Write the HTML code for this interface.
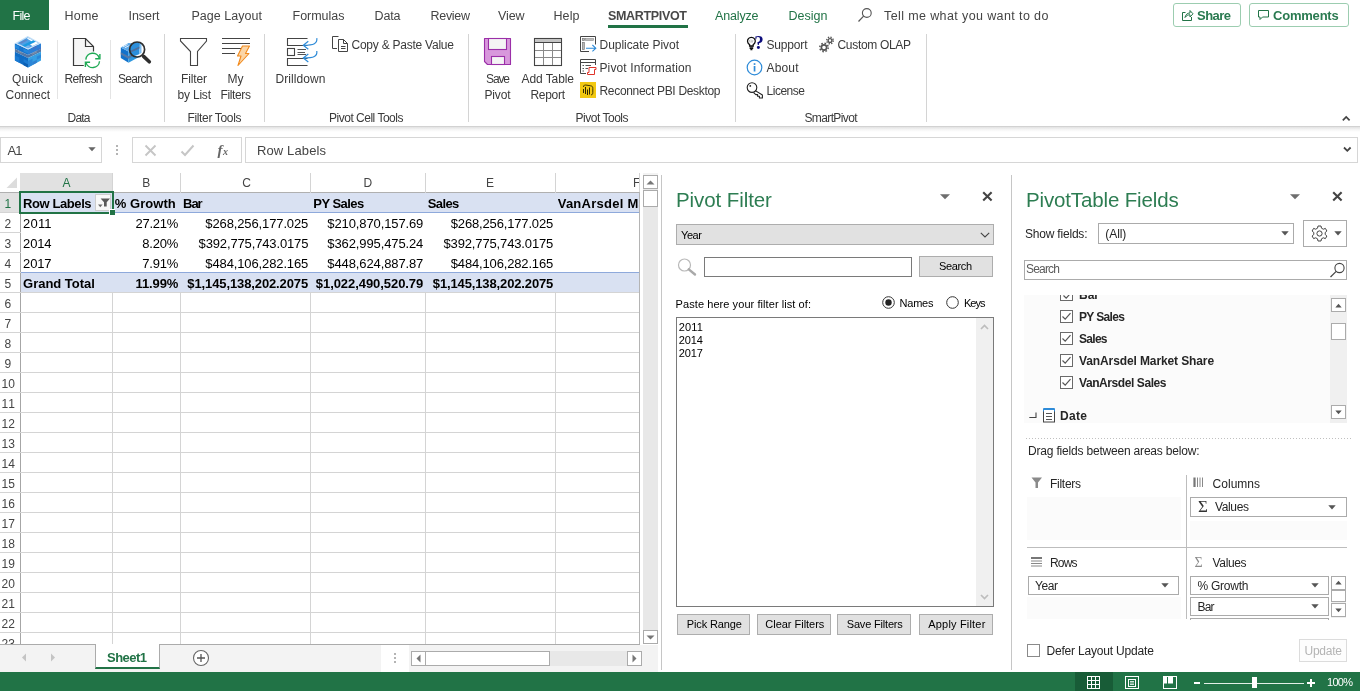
<!DOCTYPE html>
<html><head><meta charset="utf-8"><title>Excel SmartPivot</title>
<style>
html,body{margin:0;padding:0;}
body{width:1360px;height:691px;overflow:hidden;background:#fff;font-family:"Liberation Sans",sans-serif;position:relative;}
.t{position:absolute;white-space:pre;}
div,svg{box-sizing:border-box;}
svg{position:absolute;overflow:visible;}
#gl{position:absolute;left:0;top:0;width:1360px;height:691px;will-change:transform;}
</style></head><body><div id="gl">

<!-- tab row -->
<div style="position:absolute;left:0px;top:0px;width:49px;height:30px;background:#217346;"></div>
<span class="t" style="left:12.5px;top:9px;font-size:12.5px;line-height:15px;color:#fff;letter-spacing:-0.72px;">File</span>
<span class="t" style="left:64.5px;top:9px;font-size:12.5px;line-height:15px;color:#444;letter-spacing:0.22px;">Home</span>
<span class="t" style="left:128.5px;top:9px;font-size:12.5px;line-height:15px;color:#444;letter-spacing:-0.05px;">Insert</span>
<span class="t" style="left:191.5px;top:9px;font-size:12.5px;line-height:15px;color:#444;letter-spacing:0.03px;">Page Layout</span>
<span class="t" style="left:292.5px;top:9px;font-size:12.5px;line-height:15px;color:#444;letter-spacing:-0.01px;">Formulas</span>
<span class="t" style="left:374.5px;top:9px;font-size:12.5px;line-height:15px;color:#444;letter-spacing:-0.14px;">Data</span>
<span class="t" style="left:430.5px;top:9px;font-size:12.5px;line-height:15px;color:#444;letter-spacing:-0.30px;">Review</span>
<span class="t" style="left:498.0px;top:9px;font-size:12.5px;line-height:15px;color:#444;letter-spacing:-0.12px;">View</span>
<span class="t" style="left:553.5px;top:9px;font-size:12.5px;line-height:15px;color:#444;letter-spacing:0.09px;">Help</span>
<span class="t" style="left:608.0px;top:9px;font-size:12.5px;line-height:15px;color:#484848;font-weight:700;letter-spacing:-0.33px;">SMARTPIVOT</span>
<div style="position:absolute;left:608px;top:25px;width:80px;height:3px;background:#217346;"></div>
<span class="t" style="left:715.0px;top:9px;font-size:12.5px;line-height:15px;color:#217346;letter-spacing:-0.16px;">Analyze</span>
<span class="t" style="left:788.5px;top:9px;font-size:12.5px;line-height:15px;color:#217346;letter-spacing:0.02px;">Design</span>
<svg style="left:857px;top:7px" width="16" height="16" viewBox="0 0 16 16"><circle cx="9.8" cy="6" r="4.4" fill="none" stroke="#555" stroke-width="1.1"/><path d="M6.6 9.2 L1.5 14.5" stroke="#555" stroke-width="1.2" fill="none"/></svg>
<span class="t" style="left:884.0px;top:9px;font-size:12.5px;line-height:15px;color:#444;letter-spacing:0.39px;">Tell me what you want to do</span>
<div style="position:absolute;left:1173px;top:3px;width:68px;height:24px;border:1px solid #9ccdb0;border-radius:3px;background:#fff;"></div>
<svg style="left:1180px;top:8px" width="14" height="14" viewBox="0 0 14 14"><path d="M5.5 4.5 H2.5 V12.5 H11.5 V9" fill="none" stroke="#217346" stroke-width="1"/><path d="M5 9.5 C5.5 6.5 7.5 5 10 5 V2.5 L13 5.8 L10 9 V6.8 C8 6.8 6.5 7.5 5 9.5 Z" fill="none" stroke="#217346" stroke-width="1" stroke-linejoin="round"/></svg>
<span class="t" style="left:1197.0px;top:8px;font-size:13px;line-height:15px;color:#2a7a50;font-weight:700;letter-spacing:-0.54px;">Share</span>
<div style="position:absolute;left:1249px;top:3px;width:100px;height:24px;border:1px solid #9ccdb0;border-radius:3px;background:#fff;"></div>
<svg style="left:1257px;top:9px" width="13" height="13" viewBox="0 0 13 13"><path d="M1.5 1.5 H11.5 V8 H5.5 L3 10.5 V8 H1.5 Z" fill="none" stroke="#217346" stroke-width="1"/></svg>
<span class="t" style="left:1273.0px;top:8px;font-size:13px;line-height:15px;color:#2a7a50;font-weight:700;letter-spacing:-0.21px;">Comments</span>
<!-- ribbon -->
<div style="position:absolute;left:0px;top:126px;width:1360px;height:1px;background:#d2d2d2;"></div>
<div style="position:absolute;left:0px;top:127px;width:1360px;height:5px;background:linear-gradient(#e2e2e2,#f4f4f4 50%,#fff);"></div>
<div style="position:absolute;left:164px;top:34px;width:1px;height:88px;background:#d4d4d4;"></div>
<div style="position:absolute;left:264px;top:34px;width:1px;height:88px;background:#d4d4d4;"></div>
<div style="position:absolute;left:468px;top:34px;width:1px;height:88px;background:#d4d4d4;"></div>
<div style="position:absolute;left:735px;top:34px;width:1px;height:88px;background:#d4d4d4;"></div>
<div style="position:absolute;left:926px;top:34px;width:1px;height:88px;background:#d4d4d4;"></div>
<div style="position:absolute;left:57px;top:40px;width:1px;height:59px;background:#e4e4e4;"></div>
<div style="position:absolute;left:110px;top:40px;width:1px;height:59px;background:#e4e4e4;"></div>
<svg style="left:13px;top:35px" width="30" height="34" viewBox="0 0 30 34">
<path d="M1.9 8.3 L15 14.4 V19.9 L1.9 13.8 Z" fill="#1774cc"/>
<path d="M28 8.3 L15 14.4 V19.9 L28 13.8 Z" fill="#2b80d6"/>
<path d="M1.9 13.8 L15 19.9 L28 13.8 V16.7 L15 23 L1.9 16.7 Z" fill="#5478a6"/>
<path d="M5 15.6 L9 17.4 V18.6 L5 16.8 Z M19 18.4 L24 16 V17.4 L19 19.8 Z" fill="#7f8fa6"/>
<path d="M1.9 16.7 L15 23 V32.6 L1.9 25.4 Z" fill="#0f6cc4"/>
<path d="M28 16.7 L15 23 V32.6 L28 25.4 Z" fill="#36a0e3"/>
<path d="M1.9 9.5 L6 11.4 V14.5 L1.9 12.6 Z M10.5 13.4 L15 15.5 V18.5 L10.5 16.5 Z" fill="#2488dc"/>
<path d="M19.5 12.3 L24 10.2 V13 L19.5 15.1 Z M24 14 L28 12 V13.8 L24 15.7 Z" fill="#3f74c8"/>
<path d="M1.9 20.5 L6.3 22.6 V27.8 L1.9 25.4 Z M10.6 24 L15 26.2 V29.5 L10.6 27.2 Z" fill="#1a7ad2"/>
<path d="M10.6 27.2 L15 29.5 V32.6 L10.6 30.2 Z" fill="#0c5fb2"/>
<path d="M15 26 L19.5 23.8 V30.1 L15 32.6 Z M23.8 21.5 L28 19.4 V22.5 L23.8 24.7 Z" fill="#2a86d8"/>
<path d="M19.5 27 L23.8 24.7 V27.7 L19.5 30.1 Z" fill="#2f7fd0"/>
<path d="M14.7 1 L28 8.3 L15 14.4 L1.9 8.3 Z" fill="#c4dff7"/>
<path d="M14.7 2.4 L25.6 8.3 L15 13.2 L4.4 8.3 Z" fill="#4d9fe6"/>
<path d="M19.8 5.2 L22.6 6.7 L12 11.8 L9.2 10.4 Z" fill="#1b9be0"/>
<path d="M6.3 7.8 L12.6 4.5 L14.4 5.4 L8 8.7 Z" fill="#5f86c6"/>
<path d="M13.8 3.6 L15.2 2.9 L20 5.3 L18.5 6.2 Z" fill="#fff"/>
<path d="M17 9.6 L22.8 6.8 L25.4 8.2 L19.6 11 Z" fill="#fff"/>
<path d="M12.3 11.9 L15 10.6 L17 11.6 L15 12.9 Z" fill="#7ab6ee"/>
</svg>
<span class="t" style="left:12.0px;top:72px;font-size:12px;line-height:14px;color:#3a3a3a;letter-spacing:0.08px;">Quick</span>
<span class="t" style="left:5.5px;top:88px;font-size:12px;line-height:14px;color:#3a3a3a;letter-spacing:-0.03px;">Connect</span>
<svg style="left:72px;top:37px" width="30" height="32" viewBox="0 0 30 32">
<path d="M11.5 28.5 H1.5 V1.5 H13.5 L21.5 9.5 V14.5 L14 20 Z" fill="#f6f6f6" stroke="none"/>
<path d="M11.8 28.5 H1.5 V1.5 H13.5 L21.5 9.5 V14.5" fill="none" stroke="#3a3a3a" stroke-width="1.2"/>
<path d="M13.5 1.5 V9.5 H21.5" fill="none" stroke="#3a3a3a" stroke-width="1.2"/>
<path d="M13.8 22.6 A6.9 6.9 0 0 1 27.3 21.2" fill="none" stroke="#1faa55" stroke-width="1.4"/>
<path d="M27.9 17 V21.8 H23.2" fill="none" stroke="#1faa55" stroke-width="1.4"/>
<path d="M27.5 24.2 A6.9 6.9 0 0 1 14 25.6" fill="none" stroke="#1faa55" stroke-width="1.4"/>
<path d="M13.4 30 V25.2 H18.1" fill="none" stroke="#1faa55" stroke-width="1.4"/>
</svg>
<span class="t" style="left:64.5px;top:72px;font-size:12px;line-height:14px;color:#3a3a3a;letter-spacing:-0.67px;">Refresh</span>
<svg style="left:119px;top:38px" width="34" height="28" viewBox="0 0 34 28">
<path d="M1.8 9.5 L9.5 13.5 V24.8 L1.8 20.1 Z" fill="#1272cb"/>
<path d="M20 6 L9.5 13.5 V24.8 L20 19 Z" fill="#2f98df"/>
<path d="M9.5 4.9 L20 6 L9.5 13.5 L1.8 9.5 Z" fill="#5aa8ea"/>
<path d="M1.8 14.2 L9.5 18.3 L20 12.5 V14.8 L9.5 20.8 L1.8 16.6 Z" fill="#5478a6"/>
<path d="M4 8.8 L8.5 6.6 M5.8 9.8 L10.3 7.6" stroke="#e8f3fd" stroke-width="0.9"/>
<circle cx="18.1" cy="11.5" r="7.5" fill="#fff"/>
<path d="M18 4 A7.5 7.5 0 0 0 15 18.3 L20 16.2 L21 5.5 Z" fill="#2b8fdc"/>
<path d="M21 5 L22.5 4.5 V15 L20 16.2 Z" fill="#7fbdf0"/>
<path d="M11.5 12.8 L20.5 8.6 V10.4 L11.8 14.6 Z" fill="#4d6f9e"/>
<circle cx="18.1" cy="11.5" r="7.5" fill="none" stroke="#2e2e2e" stroke-width="1.7"/>
<path d="M24.6 18.4 L30.3 23.8" stroke="#2e2e2e" stroke-width="3.6" stroke-linecap="round"/>
</svg>
<span class="t" style="left:118.0px;top:72px;font-size:12px;line-height:14px;color:#3a3a3a;letter-spacing:-0.71px;">Search</span>
<span class="t" style="left:67.5px;top:111px;font-size:12px;line-height:14px;color:#3a3a3a;letter-spacing:-0.79px;">Data</span>
<svg style="left:179px;top:37px" width="30" height="30" viewBox="0 0 30 30">
<path d="M1.5 1.5 H27.5 V4 L18.5 14.5 V28.5 H11.5 V14.5 L1.5 4 Z" fill="none" stroke="#444" stroke-width="1.1"/>
</svg>
<span class="t" style="left:181.0px;top:72px;font-size:12px;line-height:14px;color:#3a3a3a;letter-spacing:-0.13px;">Filter</span>
<span class="t" style="left:177.5px;top:88px;font-size:12px;line-height:14px;color:#3a3a3a;letter-spacing:-0.20px;">by List</span>
<svg style="left:221px;top:37px" width="30" height="30" viewBox="0 0 30 30">
<path d="M1 1.5 H29 M1 6.5 H29 M1 11.5 H20 M1 16.5 H14" stroke="#444" stroke-width="1.1"/>
<path d="M21.5 9 H28.5 L24.5 16.5 H28 L17 28.5 L20 19 H16.5 Z" fill="#fbd5a6" stroke="#f28a1c" stroke-width="1.1" stroke-linejoin="round"/>
</svg>
<span class="t" style="left:227.5px;top:72px;font-size:12px;line-height:14px;color:#3a3a3a;">My</span>
<span class="t" style="left:220.5px;top:88px;font-size:12px;line-height:14px;color:#3a3a3a;letter-spacing:-0.36px;">Filters</span>
<span class="t" style="left:187.5px;top:111px;font-size:12px;line-height:14px;color:#3a3a3a;letter-spacing:-0.35px;">Filter Tools</span>
<svg style="left:286px;top:37px" width="32" height="30" viewBox="0 0 32 30">
<path d="M21.5 1.5 H1.5 V8.5 H21.5 M21.5 21.5 H1.5 V28.5 H21.5" fill="none" stroke="#444" stroke-width="1.1"/>
<rect x="1.5" y="11.5" width="7" height="7" fill="none" stroke="#444" stroke-width="1.1"/>
<path d="M11.5 12.5 H20 M11.5 15.5 H19 M11.5 17.5 H20" stroke="#555" stroke-width="1"/>
<path d="M30.8 1.2 C31.5 6.5 28 8.3 17.5 8.3 M22.3 4.3 L17.3 8.3 L22.3 12.3" fill="none" stroke="#2e8bd8" stroke-width="1.2"/>
<path d="M30.8 14 C31.5 19.3 28 21 17.5 21 M22.3 17 L17.3 21 L22.3 25" fill="none" stroke="#2e8bd8" stroke-width="1.2"/>
</svg>
<span class="t" style="left:275.5px;top:72px;font-size:12px;line-height:14px;color:#3a3a3a;letter-spacing:0.08px;">Drilldown</span>
<svg style="left:331px;top:36px" width="18" height="17" viewBox="0 0 18 17">
<path d="M6 12.5 H1.5 V0.5 H7.5" fill="none" stroke="#444" stroke-width="1"/>
<path d="M7.5 3.5 H12.5 L16.5 7.5 V15.5 H7.5 Z M12.5 3.5 V7.5 H16.5" fill="none" stroke="#444" stroke-width="1" stroke-linejoin="miter"/>
<path d="M10 10.5 H14.5 M10 12.5 H14.5" stroke="#444" stroke-width="1"/>
</svg>
<span class="t" style="left:351.5px;top:38px;font-size:12px;line-height:14px;color:#3a3a3a;letter-spacing:-0.24px;">Copy &amp; Paste Value</span>
<span class="t" style="left:329.0px;top:111px;font-size:12px;line-height:14px;color:#3a3a3a;letter-spacing:-0.49px;">Pivot Cell Tools</span>
<svg style="left:483px;top:37px" width="29" height="30" viewBox="0 0 29 30">
<path d="M1.5 1.5 H27.5 V27.5 H4.5 L1.5 24.5 Z" fill="#d898dc" stroke="#9b2fa8" stroke-width="1.1" stroke-linejoin="round"/>
<rect x="5.5" y="1.5" width="18" height="11" fill="#f4f4f4" stroke="#9b2fa8" stroke-width="1.1"/>
<rect x="8.5" y="19.5" width="13" height="8" fill="#f4f4f4" stroke="#9b2fa8" stroke-width="1.1"/>
</svg>
<span class="t" style="left:486.0px;top:72px;font-size:12px;line-height:14px;color:#3a3a3a;letter-spacing:-1.12px;">Save</span>
<span class="t" style="left:484.5px;top:88px;font-size:12px;line-height:14px;color:#3a3a3a;letter-spacing:-0.17px;">Pivot</span>
<svg style="left:534px;top:37px" width="29" height="30" viewBox="0 0 29 30">
<rect x="0.5" y="1.5" width="27" height="27" fill="#fff" stroke="#444" stroke-width="1.1"/>
<rect x="1" y="2" width="26" height="3.5" fill="#c4c4c4"/>
<path d="M0.5 5.5 H27.5" stroke="#444" stroke-width="1"/>
<path d="M1 13.5 H27 M1 20.5 H27 M9.5 6 V28 M18.5 6 V28" stroke="#8a8a8a" stroke-width="1"/>
</svg>
<span class="t" style="left:521.5px;top:72px;font-size:12px;line-height:14px;color:#3a3a3a;letter-spacing:-0.08px;">Add Table</span>
<span class="t" style="left:530.5px;top:88px;font-size:12px;line-height:14px;color:#3a3a3a;letter-spacing:-0.31px;">Report</span>
<svg style="left:580px;top:36px" width="17" height="17" viewBox="0 0 17 17">
<path d="M15.5 8.5 V0.5 H0.5 V15.5 H9" fill="none" stroke="#444" stroke-width="1"/>
<rect x="2.5" y="2.5" width="2" height="2" fill="#bbb" stroke="#777" stroke-width="0.7"/>
<rect x="5.5" y="2.6" width="8" height="1.8" fill="#bbb" stroke="#888" stroke-width="0.6"/>
<rect x="2.5" y="6.5" width="1.8" height="7" fill="#bbb" stroke="#777" stroke-width="0.7"/>
<path d="M6 12.2 H15.6 M12.4 9 L15.8 12.2 L12.4 15.4" fill="none" stroke="#2e8bd8" stroke-width="1.1"/>
</svg>
<span class="t" style="left:599.5px;top:38px;font-size:12px;line-height:14px;color:#3a3a3a;letter-spacing:-0.04px;">Duplicate Pivot</span>
<svg style="left:580px;top:59px" width="17" height="17" viewBox="0 0 17 17">
<path d="M0.5 14.5 V0.5 H15.5 V6" fill="none" stroke="#444" stroke-width="1"/>
<path d="M0.5 3.5 H15.5" stroke="#444" stroke-width="1"/>
<path d="M0.5 14.5 H6" stroke="#444" stroke-width="1"/>
<path d="M2.5 6.5 H4 M5.5 6.5 H11 M2.5 9.5 H4 M5.5 9.5 H8 M2.5 12 H4" stroke="#555" stroke-width="1"/>
<path d="M9 8.5 H16 V10.5 H14.5 V15.5 H7.5 V13.5 H9 Z" fill="#fff" stroke="#e0342b" stroke-width="1" stroke-linejoin="round"/>
</svg>
<span class="t" style="left:599.5px;top:61px;font-size:12px;line-height:14px;color:#3a3a3a;letter-spacing:0.12px;">Pivot Information</span>
<svg style="left:580px;top:82px" width="16" height="16" viewBox="0 0 16 16">
<rect x="0" y="0" width="16" height="16" fill="#f2c811"/>
<path d="M3.5 7 V11 M5.5 5 V12 M7.5 7.5 V13 M9.5 5.5 V12.5" stroke="#2d2600" stroke-width="1"/>
<path d="M3.5 5 C3.5 3 4.5 2.8 7 3.2 L10.5 3.8 C12.5 4.1 12.8 4.8 12.8 6.5 V10.5 C12.8 12.2 12.3 12.8 11 12.8" fill="none" stroke="#2d2600" stroke-width="0.9"/>
</svg>
<span class="t" style="left:599.5px;top:84px;font-size:12px;line-height:14px;color:#3a3a3a;letter-spacing:-0.32px;">Reconnect PBI Desktop</span>
<span class="t" style="left:575.5px;top:111px;font-size:12px;line-height:14px;color:#3a3a3a;letter-spacing:-0.48px;">Pivot Tools</span>
<svg style="left:746px;top:36px" width="18" height="16" viewBox="0 0 18 16">
<path d="M3.6 8.6 C1.2 7 1 4.3 2.4 2.7 C3.8 1 7 1 8.4 2.7 C9.8 4.3 9.6 7 7.2 8.6 V10 H3.6 Z" fill="#fff" stroke="#111" stroke-width="1.3"/>
<path d="M3.6 11 H7.2 M3.6 12.4 H7.2 M4.4 13.6 H6.4" stroke="#111" stroke-width="1.1"/>
<path d="M3.2 4 L4.2 6.5 M5 3.5 L5.4 6.5 M7 4 L6.4 6.5" fill="none" stroke="#999" stroke-width="0.6"/>
</svg>
<span class="t" style="left:754.3px;top:32px;font-size:19px;line-height:21px;color:#0c0c7c;font-weight:700;font-family:'Liberation Serif';">?</span>
<span class="t" style="left:766.5px;top:38px;font-size:12px;line-height:14px;color:#3a3a3a;letter-spacing:-0.17px;">Support</span>
<svg style="left:819px;top:36px" width="16" height="17" viewBox="0 0 16 17">
<g fill="none" stroke="#555">
<circle cx="5" cy="11.5" r="2.6" stroke-width="1.6"/>
<circle cx="5" cy="11.5" r="4.2" stroke-width="1.5" stroke-dasharray="1.6 1.7"/>
<circle cx="11" cy="4.5" r="1.9" stroke-width="1.4"/>
<circle cx="11" cy="4.5" r="3.3" stroke-width="1.4" stroke-dasharray="1.3 1.3"/>
</g></svg>
<span class="t" style="left:837.5px;top:38px;font-size:12px;line-height:14px;color:#3a3a3a;letter-spacing:-0.32px;">Custom OLAP</span>
<svg style="left:746px;top:59px" width="17" height="17" viewBox="0 0 17 17">
<circle cx="8.5" cy="8.5" r="7.3" fill="#fff" stroke="#2e8bd8" stroke-width="1.2"/>
<rect x="7.7" y="7" width="1.7" height="5.5" fill="#2e8bd8"/><rect x="7.7" y="4.2" width="1.7" height="1.7" fill="#2e8bd8"/>
</svg>
<span class="t" style="left:766.5px;top:61px;font-size:12px;line-height:14px;color:#3a3a3a;letter-spacing:0.16px;">About</span>
<svg style="left:746px;top:82px" width="18" height="17" viewBox="0 0 18 17">
<path d="M9.3 8.6 L16.4 13 V16 H13.4 V14.3 H11.6 V12.6 H9.8 L7.6 10.6" fill="#fff" stroke="#222" stroke-width="1.1" stroke-linejoin="round"/>
<circle cx="6" cy="5.6" r="4.8" fill="#fff" stroke="#222" stroke-width="1.1"/>
<circle cx="4.3" cy="3.9" r="0.9" fill="#222"/>
</svg>
<span class="t" style="left:766.5px;top:84px;font-size:12px;line-height:14px;color:#3a3a3a;letter-spacing:-0.48px;">License</span>
<span class="t" style="left:804.5px;top:111px;font-size:12px;line-height:14px;color:#3a3a3a;letter-spacing:-0.63px;">SmartPivot</span>
<svg style="left:1341px;top:114px" width="10" height="8" viewBox="0 0 10 8"><path d="M1.8 6.3 L5.2 2.9 L8.6 6.3" fill="none" stroke="#444" stroke-width="1.7"/></svg>
<!-- formula bar -->
<div style="position:absolute;left:0px;top:137px;width:102px;height:26px;border:1px solid #d6d6d6;background:#fff;"></div>
<span class="t" style="left:7.5px;top:143px;font-size:13px;line-height:15px;color:#444;letter-spacing:-0.91px;">A1</span>
<svg style="left:88px;top:147px" width="8" height="5" viewBox="0 0 8 5"><path d="M0.3 0.3 H7.7 L4 4.3 Z" fill="#666"/></svg>
<div style="position:absolute;left:116px;top:145px;width:2px;height:2px;background:#b4b4b4;"></div>
<div style="position:absolute;left:116px;top:149px;width:2px;height:2px;background:#b4b4b4;"></div>
<div style="position:absolute;left:116px;top:153px;width:2px;height:2px;background:#b4b4b4;"></div>
<div style="position:absolute;left:132px;top:137px;width:110px;height:26px;border:1px solid #d6d6d6;background:#fff;"></div>
<svg style="left:144px;top:144px" width="13" height="13" viewBox="0 0 13 13"><path d="M1.5 1.5 L11.5 11.5 M11.5 1.5 L1.5 11.5" stroke="#c6c6c6" stroke-width="1.9" fill="none"/></svg>
<svg style="left:180px;top:144px" width="15" height="13" viewBox="0 0 15 13"><path d="M1.5 7.5 L5 11 L13.5 1.5" stroke="#c6c6c6" stroke-width="2" fill="none"/></svg>
<span class="t" style="left:217.5px;top:142px;font-size:15px;line-height:17px;color:#666;font-weight:700;font-family:'Liberation Serif';font-style:italic;">f</span>
<span class="t" style="left:223.0px;top:146px;font-size:10px;line-height:12px;color:#666;font-weight:700;font-family:'Liberation Serif';font-style:italic;">x</span>
<div style="position:absolute;left:245px;top:137px;width:1113px;height:26px;border:1px solid #d6d6d6;background:#fff;"></div>
<span class="t" style="left:257.0px;top:143px;font-size:13px;line-height:15px;color:#444;letter-spacing:0.12px;">Row Labels</span>
<svg style="left:1343px;top:146px" width="9" height="7" viewBox="0 0 9 7"><path d="M1 1.5 L4.3 4.8 L7.6 1.5" fill="none" stroke="#444" stroke-width="1.8"/></svg>
<!-- sheet -->
<div style="position:absolute;left:20px;top:173px;width:92px;height:19px;background:#e1e1e1;"></div>
<div style="position:absolute;left:0px;top:193px;width:20px;height:19px;background:#e1e1e1;"></div>
<svg style="left:6px;top:177px" width="12" height="12" viewBox="0 0 12 12"><path d="M11 0.5 V11 H0.5 Z" fill="#dcdcdc"/></svg>
<div style="position:absolute;left:0px;top:192px;width:640px;height:1px;background:#b0b0b0;"></div>
<div style="position:absolute;left:20px;top:192px;width:1px;height:452px;background:#a6a6a6;"></div>
<div style="position:absolute;left:0px;top:212px;width:640px;height:1px;background:#d4d4d4;"></div>
<div style="position:absolute;left:0px;top:232px;width:640px;height:1px;background:#d4d4d4;"></div>
<div style="position:absolute;left:0px;top:252px;width:640px;height:1px;background:#d4d4d4;"></div>
<div style="position:absolute;left:0px;top:272px;width:640px;height:1px;background:#d4d4d4;"></div>
<div style="position:absolute;left:0px;top:292px;width:640px;height:1px;background:#d4d4d4;"></div>
<div style="position:absolute;left:0px;top:312px;width:640px;height:1px;background:#d4d4d4;"></div>
<div style="position:absolute;left:0px;top:332px;width:640px;height:1px;background:#d4d4d4;"></div>
<div style="position:absolute;left:0px;top:352px;width:640px;height:1px;background:#d4d4d4;"></div>
<div style="position:absolute;left:0px;top:372px;width:640px;height:1px;background:#d4d4d4;"></div>
<div style="position:absolute;left:0px;top:392px;width:640px;height:1px;background:#d4d4d4;"></div>
<div style="position:absolute;left:0px;top:412px;width:640px;height:1px;background:#d4d4d4;"></div>
<div style="position:absolute;left:0px;top:432px;width:640px;height:1px;background:#d4d4d4;"></div>
<div style="position:absolute;left:0px;top:452px;width:640px;height:1px;background:#d4d4d4;"></div>
<div style="position:absolute;left:0px;top:472px;width:640px;height:1px;background:#d4d4d4;"></div>
<div style="position:absolute;left:0px;top:492px;width:640px;height:1px;background:#d4d4d4;"></div>
<div style="position:absolute;left:0px;top:512px;width:640px;height:1px;background:#d4d4d4;"></div>
<div style="position:absolute;left:0px;top:532px;width:640px;height:1px;background:#d4d4d4;"></div>
<div style="position:absolute;left:0px;top:552px;width:640px;height:1px;background:#d4d4d4;"></div>
<div style="position:absolute;left:0px;top:572px;width:640px;height:1px;background:#d4d4d4;"></div>
<div style="position:absolute;left:0px;top:592px;width:640px;height:1px;background:#d4d4d4;"></div>
<div style="position:absolute;left:0px;top:612px;width:640px;height:1px;background:#d4d4d4;"></div>
<div style="position:absolute;left:0px;top:632px;width:640px;height:1px;background:#d4d4d4;"></div>
<div style="position:absolute;left:112px;top:173px;width:1px;height:472px;background:#d4d4d4;"></div>
<div style="position:absolute;left:180px;top:173px;width:1px;height:472px;background:#d4d4d4;"></div>
<div style="position:absolute;left:310px;top:173px;width:1px;height:472px;background:#d4d4d4;"></div>
<div style="position:absolute;left:425px;top:173px;width:1px;height:472px;background:#d4d4d4;"></div>
<div style="position:absolute;left:555px;top:173px;width:1px;height:472px;background:#d4d4d4;"></div>
<div style="position:absolute;left:639px;top:173px;width:1px;height:472px;background:#d4d4d4;"></div>
<div style="position:absolute;left:21px;top:193px;width:618px;height:19px;background:#d9e1f2;"></div>
<div style="position:absolute;left:21px;top:273px;width:618px;height:19px;background:#d9e1f2;"></div>
<div style="position:absolute;left:21px;top:213px;width:618px;height:59px;background:#fff;"></div>
<div style="position:absolute;left:21px;top:212px;width:618px;height:1px;background:#8ea9db;"></div>
<div style="position:absolute;left:21px;top:272px;width:618px;height:1px;background:#8ea9db;"></div>
<div style="position:absolute;left:639px;top:192px;width:1px;height:452px;background:#b4b4b4;"></div>
<span class="t" style="left:62.5px;top:176px;font-size:12px;line-height:14px;color:#217346;">A</span>
<span class="t" style="left:142.2px;top:176px;font-size:12px;line-height:14px;color:#444;">B</span>
<span class="t" style="left:242.2px;top:176px;font-size:12px;line-height:14px;color:#444;">C</span>
<span class="t" style="left:363.5px;top:176px;font-size:12px;line-height:14px;color:#444;">D</span>
<span class="t" style="left:486.0px;top:176px;font-size:12px;line-height:14px;color:#444;">E</span>
<span class="t" style="left:633.0px;top:176px;font-size:12px;line-height:14px;color:#444;width:6px;overflow:hidden;">F</span>
<span class="t" style="left:4.5px;top:197px;font-size:12px;line-height:14px;color:#217346;">1</span>
<span class="t" style="left:4.5px;top:217px;font-size:12px;line-height:14px;color:#444;">2</span>
<span class="t" style="left:4.5px;top:237px;font-size:12px;line-height:14px;color:#444;">3</span>
<span class="t" style="left:4.5px;top:257px;font-size:12px;line-height:14px;color:#444;">4</span>
<span class="t" style="left:4.5px;top:277px;font-size:12px;line-height:14px;color:#444;">5</span>
<span class="t" style="left:4.5px;top:297px;font-size:12px;line-height:14px;color:#444;">6</span>
<span class="t" style="left:4.5px;top:317px;font-size:12px;line-height:14px;color:#444;">7</span>
<span class="t" style="left:4.5px;top:337px;font-size:12px;line-height:14px;color:#444;">8</span>
<span class="t" style="left:4.5px;top:357px;font-size:12px;line-height:14px;color:#444;">9</span>
<span class="t" style="left:1.5px;top:377px;font-size:12px;line-height:14px;color:#444;letter-spacing:0.14px;">10</span>
<span class="t" style="left:1.5px;top:397px;font-size:12px;line-height:14px;color:#444;letter-spacing:1.03px;">11</span>
<span class="t" style="left:1.5px;top:417px;font-size:12px;line-height:14px;color:#444;letter-spacing:0.14px;">12</span>
<span class="t" style="left:1.5px;top:437px;font-size:12px;line-height:14px;color:#444;letter-spacing:0.14px;">13</span>
<span class="t" style="left:1.5px;top:457px;font-size:12px;line-height:14px;color:#444;letter-spacing:0.14px;">14</span>
<span class="t" style="left:1.5px;top:477px;font-size:12px;line-height:14px;color:#444;letter-spacing:0.14px;">15</span>
<span class="t" style="left:1.5px;top:497px;font-size:12px;line-height:14px;color:#444;letter-spacing:0.14px;">16</span>
<span class="t" style="left:1.5px;top:517px;font-size:12px;line-height:14px;color:#444;letter-spacing:0.14px;">17</span>
<span class="t" style="left:1.5px;top:537px;font-size:12px;line-height:14px;color:#444;letter-spacing:0.14px;">18</span>
<span class="t" style="left:1.5px;top:557px;font-size:12px;line-height:14px;color:#444;letter-spacing:0.14px;">19</span>
<span class="t" style="left:1.5px;top:577px;font-size:12px;line-height:14px;color:#444;letter-spacing:0.14px;">20</span>
<span class="t" style="left:1.5px;top:597px;font-size:12px;line-height:14px;color:#444;letter-spacing:0.14px;">21</span>
<span class="t" style="left:1.5px;top:617px;font-size:12px;line-height:14px;color:#444;letter-spacing:0.14px;">22</span>
<span class="t" style="left:1.5px;top:637px;font-size:12px;line-height:14px;color:#444;letter-spacing:0.14px;">23</span>
<div style="position:absolute;left:0px;top:645px;width:660px;height:28px;background:#fff;"></div>
<div style="position:absolute;left:0px;top:644px;width:640px;height:1px;background:#ababab;"></div>
<span class="t" style="left:23.1px;top:196px;font-size:13px;line-height:15px;color:#000;font-weight:700;letter-spacing:-0.42px;">Row Labels</span>
<span class="t" style="left:114.8px;top:196px;font-size:13px;line-height:15px;color:#000;font-weight:700;letter-spacing:0.05px;">% Growth</span>
<span class="t" style="left:183.1px;top:196px;font-size:13px;line-height:15px;color:#000;font-weight:700;letter-spacing:-1.09px;">Bar</span>
<span class="t" style="left:313.3px;top:196px;font-size:13px;line-height:15px;color:#000;font-weight:700;letter-spacing:-0.53px;">PY Sales</span>
<span class="t" style="left:427.8px;top:196px;font-size:13px;line-height:15px;color:#000;font-weight:700;letter-spacing:-0.62px;">Sales</span>
<span class="t" style="left:557.7px;top:196px;font-size:13px;line-height:15px;color:#000;font-weight:700;letter-spacing:0.25px;width:81.3px;overflow:hidden;">VanArsdel Market Share</span>
<span class="t" style="left:23.1px;top:216px;font-size:13px;line-height:15px;color:#000;letter-spacing:0.18px;">2011</span>
<span class="t" style="left:23.1px;top:236px;font-size:13px;line-height:15px;color:#000;letter-spacing:-0.14px;">2014</span>
<span class="t" style="left:23.1px;top:256px;font-size:13px;line-height:15px;color:#000;letter-spacing:-0.14px;">2017</span>
<span class="t" style="left:23.1px;top:276px;font-size:13px;line-height:15px;color:#000;font-weight:700;letter-spacing:-0.02px;">Grand Total</span>
<span class="t" style="left:135.6px;top:216px;font-size:13px;line-height:15px;color:#000;letter-spacing:-0.27px;">27.21%</span>
<span class="t" style="left:142.3px;top:236px;font-size:13px;line-height:15px;color:#000;letter-spacing:-0.22px;">8.20%</span>
<span class="t" style="left:142.3px;top:256px;font-size:13px;line-height:15px;color:#000;letter-spacing:-0.22px;">7.91%</span>
<span class="t" style="left:135.6px;top:276px;font-size:13px;line-height:15px;color:#000;font-weight:700;letter-spacing:-0.12px;">11.99%</span>
<span class="t" style="left:205.3px;top:216px;font-size:13px;line-height:15px;color:#000;letter-spacing:-0.12px;">$268,256,177.025</span>
<span class="t" style="left:198.6px;top:236px;font-size:13px;line-height:15px;color:#000;letter-spacing:-0.14px;">$392,775,743.0175</span>
<span class="t" style="left:205.3px;top:256px;font-size:13px;line-height:15px;color:#000;letter-spacing:-0.12px;">$484,106,282.165</span>
<span class="t" style="left:187.3px;top:276px;font-size:13px;line-height:15px;color:#000;font-weight:700;letter-spacing:-0.11px;">$1,145,138,202.2075</span>
<span class="t" style="left:327.3px;top:216px;font-size:13px;line-height:15px;color:#000;letter-spacing:-0.11px;">$210,870,157.69</span>
<span class="t" style="left:327.3px;top:236px;font-size:13px;line-height:15px;color:#000;letter-spacing:-0.11px;">$362,995,475.24</span>
<span class="t" style="left:327.3px;top:256px;font-size:13px;line-height:15px;color:#000;letter-spacing:-0.11px;">$448,624,887.87</span>
<span class="t" style="left:315.8px;top:276px;font-size:13px;line-height:15px;color:#000;font-weight:700;letter-spacing:-0.06px;">$1,022,490,520.79</span>
<span class="t" style="left:450.8px;top:216px;font-size:13px;line-height:15px;color:#000;letter-spacing:-0.16px;">$268,256,177.025</span>
<span class="t" style="left:443.5px;top:236px;font-size:13px;line-height:15px;color:#000;letter-spacing:-0.14px;">$392,775,743.0175</span>
<span class="t" style="left:450.8px;top:256px;font-size:13px;line-height:15px;color:#000;letter-spacing:-0.16px;">$484,106,282.165</span>
<span class="t" style="left:432.8px;top:276px;font-size:13px;line-height:15px;color:#000;font-weight:700;letter-spacing:-0.13px;">$1,145,138,202.2075</span>
<div style="position:absolute;left:95px;top:194px;width:16px;height:17px;border:1px solid #cdcdcd;background:#f8f8f8;"></div>
<svg style="left:97px;top:198px" width="14" height="10" viewBox="0 0 14 10"><path d="M3.6 0.4 H13 L9.7 4.2 V8.4 H7 V4.2 Z" fill="#5a5a5a"/><path d="M1 6.6 H5.6 L3.3 9.2 Z" fill="#6a6a6a"/></svg>
<div style="position:absolute;left:19px;top:191px;width:95px;height:23px;border:2px solid #217346;"></div>
<div style="position:absolute;left:109px;top:209px;width:6px;height:6px;background:#217346;border:1px solid #fff;border-right:none;border-bottom:none;"></div>
<div style="position:absolute;left:640px;top:173px;width:21px;height:472px;background:#fff;"></div>
<div style="position:absolute;left:643px;top:173px;width:15px;height:471px;background:#e8e8e8;"></div>
<div style="position:absolute;left:643px;top:173px;width:15px;height:3px;background:#f3f3f3;"></div>
<div style="position:absolute;left:643px;top:175px;width:15px;height:14px;border:1px solid #ababab;background:#fff;"></div>
<svg style="left:646px;top:180px" width="9" height="5" viewBox="0 0 9 5"><path d="M0.5 4.5 L4.5 0.5 L8.5 4.5 Z" fill="#777"/></svg>
<div style="position:absolute;left:643px;top:190px;width:15px;height:17px;border:1px solid #ababab;background:#fff;"></div>
<div style="position:absolute;left:643px;top:630px;width:15px;height:14px;border:1px solid #ababab;background:#fff;"></div>
<svg style="left:646px;top:635px" width="9" height="5" viewBox="0 0 9 5"><path d="M0.5 0.5 L4.5 4.5 L8.5 0.5 Z" fill="#777"/></svg>
<div style="position:absolute;left:0px;top:645px;width:661px;height:27px;background:#f3f3f3;"></div>
<div style="position:absolute;left:381px;top:645px;width:28px;height:27px;background:#fff;"></div>
<svg style="left:21px;top:653px" width="6" height="9" viewBox="0 0 6 9"><path d="M5 0.5 L1 4.5 L5 8.5 Z" fill="#c4c4c4"/></svg>
<svg style="left:50px;top:653px" width="6" height="9" viewBox="0 0 6 9"><path d="M1 0.5 L5 4.5 L1 8.5 Z" fill="#c4c4c4"/></svg>
<div style="position:absolute;left:95px;top:644px;width:65px;height:25px;background:#fff;border-left:1px solid #ababab;border-right:1px solid #ababab;border-bottom:2px solid #217346;"></div>
<span class="t" style="left:107.0px;top:650px;font-size:13px;line-height:15px;color:#217346;font-weight:700;letter-spacing:-0.53px;">Sheet1</span>
<svg style="left:192px;top:649px" width="18" height="18" viewBox="0 0 18 18"><circle cx="9" cy="9" r="7.5" fill="#fff" stroke="#666" stroke-width="1.1"/><path d="M9 5 V13 M5 9 H13" stroke="#555" stroke-width="1.3"/></svg>
<div style="position:absolute;left:394px;top:653px;width:2px;height:2px;background:#b4b4b4;"></div>
<div style="position:absolute;left:394px;top:657px;width:2px;height:2px;background:#b4b4b4;"></div>
<div style="position:absolute;left:394px;top:661px;width:2px;height:2px;background:#b4b4b4;"></div>
<div style="position:absolute;left:426px;top:651px;width:201px;height:15px;background:#e8e8e8;"></div>
<div style="position:absolute;left:411px;top:651px;width:15px;height:15px;border:1px solid #ababab;background:#fff;"></div>
<svg style="left:416px;top:654px" width="5" height="9" viewBox="0 0 5 9"><path d="M4.5 0.5 L0.5 4.5 L4.5 8.5 Z" fill="#777"/></svg>
<div style="position:absolute;left:425px;top:651px;width:125px;height:15px;border:1px solid #ababab;background:#fff;"></div>
<div style="position:absolute;left:627px;top:651px;width:15px;height:15px;border:1px solid #ababab;background:#fff;"></div>
<svg style="left:632px;top:654px" width="5" height="9" viewBox="0 0 5 9"><path d="M0.5 0.5 L4.5 4.5 L0.5 8.5 Z" fill="#777"/></svg>
<!-- pivot filter pane -->
<div style="position:absolute;left:658px;top:173px;width:704px;height:499px;background:#fff;"></div>
<div style="position:absolute;left:661px;top:175px;width:1px;height:495px;background:#c6c6c6;"></div>
<span class="t" style="left:676.0px;top:188px;font-size:20.5px;line-height:23px;color:#2d7d52;letter-spacing:-0.08px;">Pivot Filter</span>
<svg style="left:940px;top:194px" width="10" height="6" viewBox="0 0 10 6"><path d="M0 0.3 H10 L5 5.3 Z" fill="#6e6e6e"/></svg>
<svg style="left:982px;top:191px" width="11" height="11" viewBox="0 0 11 11"><path d="M1.2 1.2 L9.6 9.6 M9.6 1.2 L1.2 9.6" stroke="#444" stroke-width="2.1" fill="none"/></svg>
<div style="position:absolute;left:676px;top:224px;width:318px;height:21px;border:1px solid #adadad;background:#e1e1e1;"></div>
<span class="t" style="left:681.0px;top:229px;font-size:11px;line-height:13px;color:#000;letter-spacing:-0.41px;">Year</span>
<svg style="left:980px;top:232px" width="10" height="6" viewBox="0 0 10 6"><path d="M0.8 0.8 L5 5 L9.2 0.8" fill="none" stroke="#444" stroke-width="1.1"/></svg>
<svg style="left:677px;top:258px" width="20" height="18" viewBox="0 0 20 18"><circle cx="7.5" cy="7" r="6" fill="#fff" stroke="#b9b9b9" stroke-width="1.2"/><path d="M11.8 11.3 L18 16.5" stroke="#a9a9a9" stroke-width="2.4" stroke-linecap="round"/></svg>
<div style="position:absolute;left:704px;top:257px;width:208px;height:20px;border:1px solid #7a7a7a;background:#fff;"></div>
<div style="position:absolute;left:919px;top:256px;width:74px;height:21px;border:1px solid #adadad;background:#e1e1e1;"></div>
<span class="t" style="left:939.0px;top:260px;font-size:11px;line-height:13px;color:#000;letter-spacing:-0.37px;">Search</span>
<span class="t" style="left:675.6px;top:298px;font-size:11px;line-height:13px;color:#000;letter-spacing:0.07px;">Paste here your filter list of:</span>
<svg style="left:882px;top:296px" width="13" height="13" viewBox="0 0 13 13"><circle cx="6.5" cy="6.5" r="5.8" fill="#fff" stroke="#333" stroke-width="1"/><circle cx="6.5" cy="6.5" r="3.2" fill="#222"/></svg>
<span class="t" style="left:899.6px;top:297px;font-size:11px;line-height:13px;color:#000;letter-spacing:-0.26px;">Names</span>
<svg style="left:946px;top:296px" width="13" height="13" viewBox="0 0 13 13"><circle cx="6.5" cy="6.5" r="5.8" fill="#fff" stroke="#333" stroke-width="1"/></svg>
<span class="t" style="left:964.0px;top:297px;font-size:11px;line-height:13px;color:#000;letter-spacing:-0.99px;">Keys</span>
<div style="position:absolute;left:676px;top:317px;width:318px;height:290px;border:1px solid #7a7a7a;background:#fff;"></div>
<div style="position:absolute;left:976px;top:318px;width:17px;height:288px;background:#f0f0f0;"></div>
<svg style="left:980px;top:324px" width="9" height="6" viewBox="0 0 9 6"><path d="M1 5 L4.5 1.5 L8 5" fill="none" stroke="#bdbdbd" stroke-width="1.7"/></svg>
<svg style="left:980px;top:594px" width="9" height="6" viewBox="0 0 9 6"><path d="M1 1 L4.5 4.5 L8 1" fill="none" stroke="#bdbdbd" stroke-width="1.7"/></svg>
<span class="t" style="left:678.8px;top:321px;font-size:11px;line-height:13px;color:#000;letter-spacing:0.11px;">2011</span>
<span class="t" style="left:678.8px;top:334px;font-size:11px;line-height:13px;color:#000;letter-spacing:-0.16px;">2014</span>
<span class="t" style="left:678.8px;top:347px;font-size:11px;line-height:13px;color:#000;letter-spacing:-0.16px;">2017</span>
<div style="position:absolute;left:677px;top:614px;width:73px;height:21px;border:1px solid #adadad;background:#e1e1e1;"></div>
<span class="t" style="left:686.8px;top:618px;font-size:11px;line-height:13px;color:#000;letter-spacing:-0.14px;">Pick Range</span>
<div style="position:absolute;left:757px;top:614px;width:74px;height:21px;border:1px solid #adadad;background:#e1e1e1;"></div>
<span class="t" style="left:765.3px;top:618px;font-size:11px;line-height:13px;color:#000;letter-spacing:-0.02px;">Clear Filters</span>
<div style="position:absolute;left:837px;top:614px;width:74px;height:21px;border:1px solid #adadad;background:#e1e1e1;"></div>
<span class="t" style="left:846.8px;top:618px;font-size:11px;line-height:13px;color:#000;letter-spacing:-0.19px;">Save Filters</span>
<div style="position:absolute;left:919px;top:614px;width:74px;height:21px;border:1px solid #adadad;background:#e1e1e1;"></div>
<span class="t" style="left:928.3px;top:618px;font-size:11px;line-height:13px;color:#000;letter-spacing:0.18px;">Apply Filter</span>
<!-- pivottable fields pane -->
<div style="position:absolute;left:1011px;top:175px;width:1px;height:495px;background:#c6c6c6;"></div>
<span class="t" style="left:1026.0px;top:188px;font-size:20.5px;line-height:23px;color:#2d7d52;letter-spacing:-0.14px;">PivotTable Fields</span>
<svg style="left:1290px;top:194px" width="10" height="6" viewBox="0 0 10 6"><path d="M0 0.3 H10 L5 5.3 Z" fill="#6e6e6e"/></svg>
<svg style="left:1332px;top:191px" width="11" height="11" viewBox="0 0 11 11"><path d="M1.2 1.2 L9.6 9.6 M9.6 1.2 L1.2 9.6" stroke="#444" stroke-width="2.1" fill="none"/></svg>
<span class="t" style="left:1025.0px;top:227px;font-size:12px;line-height:14px;color:#262626;letter-spacing:-0.20px;">Show fields:</span>
<div style="position:absolute;left:1098px;top:223px;width:196px;height:21px;border:1px solid #ababab;background:#fff;"></div>
<span class="t" style="left:1105.3px;top:227px;font-size:12px;line-height:14px;color:#262626;letter-spacing:-0.08px;">(All)</span>
<svg style="left:1281px;top:231px" width="8" height="5" viewBox="0 0 8 5"><path d="M0.3 0.3 H7.7 L4 4.4 Z" fill="#555"/></svg>
<div style="position:absolute;left:1303px;top:220px;width:44px;height:27px;border:1px solid #ababab;background:#fff;"></div>
<svg style="left:1311px;top:225px" width="17" height="17" viewBox="0 0 17 17">
<path d="M7 1 H10 L10.5 3.2 L12.3 4.2 L14.4 3.4 L15.9 6 L14.2 7.5 V9.5 L15.9 11 L14.4 13.6 L12.3 12.8 L10.5 13.8 L10 16 H7 L6.5 13.8 L4.7 12.8 L2.6 13.6 L1.1 11 L2.8 9.5 V7.5 L1.1 6 L2.6 3.4 L4.7 4.2 L6.5 3.2 Z" fill="none" stroke="#444" stroke-width="1" stroke-linejoin="round"/>
<circle cx="8.5" cy="8.5" r="2.6" fill="none" stroke="#444" stroke-width="1"/></svg>
<svg style="left:1334px;top:231px" width="8" height="5" viewBox="0 0 8 5"><path d="M0.3 0.3 H7.7 L4 4.4 Z" fill="#555"/></svg>
<div style="position:absolute;left:1024px;top:260px;width:323px;height:20px;border:1px solid #ababab;background:#fff;"></div>
<span class="t" style="left:1026.0px;top:262px;font-size:12px;line-height:14px;color:#5a5a5a;letter-spacing:-0.81px;">Search</span>
<svg style="left:1329px;top:262px" width="17" height="17" viewBox="0 0 17 17"><circle cx="10.5" cy="6" r="4.6" fill="none" stroke="#444" stroke-width="1.1"/><path d="M7.2 9.3 L1.5 15" stroke="#444" stroke-width="1.2"/></svg>
<div style="position:absolute;left:1024px;top:295px;width:306px;height:128px;background:#fbfbfb;overflow:hidden;"></div>
<div style="position:absolute;left:1330px;top:295px;width:17px;height:128px;background:#f0f0f0;"></div>
<div style="position:absolute;left:1024px;top:295px;width:306px;height:10px;overflow:hidden;"><div style="position:absolute;left:36px;top:-7px;width:13px;height:13px;border:1px solid #6a6a6a;background:#fff;"></div><svg style="left:38px;top:-4px" width="11" height="9" viewBox="0 0 11 9"><path d="M1.5 4.5 L4.2 7.2 L9.5 1.2" fill="none" stroke="#555" stroke-width="1.2"/></svg><span class="t" style="left:55px;top:-7px;font-size:12px;line-height:14px;font-weight:700;color:#262626">Bar</span></div>
<div style="position:absolute;left:1060px;top:310px;width:13px;height:13px;border:1px solid #6a6a6a;background:#fff;"></div><svg style="left:1061px;top:312px" width="11" height="9" viewBox="0 0 11 9"><path d="M1.5 4.5 L4.2 7.2 L9.5 1.2" fill="none" stroke="#555" stroke-width="1.2"/></svg>
<span class="t" style="left:1079.0px;top:310px;font-size:12px;line-height:14px;color:#262626;font-weight:700;letter-spacing:-0.64px;">PY Sales</span>
<div style="position:absolute;left:1060px;top:332px;width:13px;height:13px;border:1px solid #6a6a6a;background:#fff;"></div><svg style="left:1061px;top:334px" width="11" height="9" viewBox="0 0 11 9"><path d="M1.5 4.5 L4.2 7.2 L9.5 1.2" fill="none" stroke="#555" stroke-width="1.2"/></svg>
<span class="t" style="left:1079.0px;top:332px;font-size:12px;line-height:14px;color:#262626;font-weight:700;letter-spacing:-0.71px;">Sales</span>
<div style="position:absolute;left:1060px;top:354px;width:13px;height:13px;border:1px solid #6a6a6a;background:#fff;"></div><svg style="left:1061px;top:356px" width="11" height="9" viewBox="0 0 11 9"><path d="M1.5 4.5 L4.2 7.2 L9.5 1.2" fill="none" stroke="#555" stroke-width="1.2"/></svg>
<span class="t" style="left:1079.0px;top:354px;font-size:12px;line-height:14px;color:#262626;font-weight:700;letter-spacing:-0.11px;">VanArsdel Market Share</span>
<div style="position:absolute;left:1060px;top:376px;width:13px;height:13px;border:1px solid #6a6a6a;background:#fff;"></div><svg style="left:1061px;top:378px" width="11" height="9" viewBox="0 0 11 9"><path d="M1.5 4.5 L4.2 7.2 L9.5 1.2" fill="none" stroke="#555" stroke-width="1.2"/></svg>
<span class="t" style="left:1079.0px;top:376px;font-size:12px;line-height:14px;color:#262626;font-weight:700;letter-spacing:-0.42px;">VanArsdel Sales</span>
<svg style="left:1029px;top:409px" width="8" height="10" viewBox="0 0 8 10"><path d="M0.3 8.5 H7 V3.5" fill="none" stroke="#444" stroke-width="1.1"/></svg>
<svg style="left:1042px;top:407px" width="14" height="15" viewBox="0 0 14 15">
<rect x="1.5" y="2.5" width="11" height="12.5" fill="#fff" stroke="#444" stroke-width="1"/>
<path d="M1.5 4.5 V1.5 H12.5 V4.5" fill="none" stroke="#2e8bd8" stroke-width="1"/><path d="M2 2.5 H12" stroke="#2e8bd8" stroke-width="1"/>
<path d="M4 6.5 H10 M4 9.5 H10 M4 12.5 H10" stroke="#555" stroke-width="1"/></svg>
<span class="t" style="left:1060.0px;top:409px;font-size:12px;line-height:14px;color:#262626;font-weight:700;letter-spacing:0.33px;">Date</span>
<div style="position:absolute;left:1331px;top:298px;width:15px;height:14px;border:1px solid #ababab;background:#fff;"></div>
<svg style="left:1335px;top:303px" width="7" height="5" viewBox="0 0 7 5"><path d="M0.3 4.5 L3.5 0.7 L6.7 4.5 Z" fill="#555"/></svg>
<div style="position:absolute;left:1331px;top:323px;width:15px;height:17px;border:1px solid #ababab;background:#fff;"></div>
<div style="position:absolute;left:1331px;top:405px;width:15px;height:14px;border:1px solid #ababab;background:#fff;"></div>
<svg style="left:1335px;top:410px" width="7" height="5" viewBox="0 0 7 5"><path d="M0.3 0.5 L3.5 4.3 L6.7 0.5 Z" fill="#555"/></svg>
<div style="position:absolute;left:1026px;top:438px;width:325px;height:1px;background:repeating-linear-gradient(90deg,#c0c0c0 0 1px,transparent 1px 3px);"></div>
<span class="t" style="left:1028.0px;top:444px;font-size:12px;line-height:14px;color:#262626;letter-spacing:-0.19px;">Drag fields between areas below:</span>
<div style="position:absolute;left:1186px;top:475px;width:1px;height:144px;background:#bdbdbd;"></div>
<div style="position:absolute;left:1027px;top:547px;width:320px;height:1px;background:#bdbdbd;"></div>
<svg style="left:1031px;top:477px" width="12" height="12" viewBox="0 0 12 12"><path d="M0.5 0.5 H11 L7 5.5 V11 H4.5 V5.5 Z" fill="#8a8a8a"/></svg>
<span class="t" style="left:1050.0px;top:477px;font-size:12px;line-height:14px;color:#262626;letter-spacing:-0.28px;">Filters</span>
<div style="position:absolute;left:1027px;top:497px;width:154px;height:43px;background:#fbfbfb;"></div>
<svg style="left:1193px;top:477px" width="11" height="11" viewBox="0 0 11 11"><path d="M1.5 0.5 V10 " stroke="#777" stroke-width="2.2"/><path d="M4.5 0.5 V10 M7 0.5 V10 M9.5 0.5 V10" stroke="#888" stroke-width="1"/></svg>
<span class="t" style="left:1212.6px;top:477px;font-size:12px;line-height:14px;color:#262626;letter-spacing:0.02px;">Columns</span>
<div style="position:absolute;left:1190px;top:497px;width:157px;height:20px;border:1px solid #ababab;background:#fff;"></div>
<span class="t" style="left:1198.0px;top:497px;font-size:17px;line-height:19px;color:#333;font-family:'Liberation Serif';">Σ</span>
<span class="t" style="left:1215.0px;top:500px;font-size:12px;line-height:14px;color:#262626;letter-spacing:-0.36px;">Values</span>
<svg style="left:1328px;top:505px" width="8" height="5" viewBox="0 0 8 5"><path d="M0.3 0.3 H7.7 L4 4.4 Z" fill="#555"/></svg>
<div style="position:absolute;left:1190px;top:521px;width:157px;height:19px;background:#fbfbfb;"></div>
<svg style="left:1031px;top:557px" width="11" height="10" viewBox="0 0 11 10"><path d="M0 1 H11" stroke="#777" stroke-width="2"/><path d="M0 4 H11 M0 6.5 H11 M0 9 H11" stroke="#888" stroke-width="1"/></svg>
<span class="t" style="left:1050.0px;top:556px;font-size:12px;line-height:14px;color:#262626;letter-spacing:-0.84px;">Rows</span>
<div style="position:absolute;left:1028px;top:576px;width:151px;height:19px;border:1px solid #ababab;background:#fff;"></div>
<span class="t" style="left:1035.0px;top:579px;font-size:12px;line-height:14px;color:#262626;letter-spacing:-0.42px;">Year</span>
<svg style="left:1161px;top:583px" width="8" height="5" viewBox="0 0 8 5"><path d="M0.3 0.3 H7.7 L4 4.4 Z" fill="#555"/></svg>
<div style="position:absolute;left:1027px;top:597px;width:154px;height:22px;background:#fbfbfb;"></div>
<span class="t" style="left:1194.5px;top:555px;font-size:14px;line-height:16px;color:#8a8a8a;font-family:'Liberation Serif';">Σ</span>
<span class="t" style="left:1212.6px;top:556px;font-size:12px;line-height:14px;color:#262626;letter-spacing:-0.36px;">Values</span>
<div style="position:absolute;left:1190px;top:576px;width:139px;height:19px;border:1px solid #ababab;background:#fff;"></div>
<span class="t" style="left:1197.5px;top:579px;font-size:12px;line-height:14px;color:#262626;letter-spacing:-0.24px;">% Growth</span>
<svg style="left:1311px;top:583px" width="8" height="5" viewBox="0 0 8 5"><path d="M0.3 0.3 H7.7 L4 4.4 Z" fill="#555"/></svg>
<div style="position:absolute;left:1190px;top:597px;width:139px;height:19px;border:1px solid #ababab;background:#fff;"></div>
<span class="t" style="left:1197.5px;top:600px;font-size:12px;line-height:14px;color:#262626;letter-spacing:-0.84px;">Bar</span>
<svg style="left:1311px;top:604px" width="8" height="5" viewBox="0 0 8 5"><path d="M0.3 0.3 H7.7 L4 4.4 Z" fill="#555"/></svg>
<div style="position:absolute;left:1190px;top:618px;width:139px;height:2px;border:1px solid #ababab;border-bottom:none;background:#fff;"></div>
<div style="position:absolute;left:1331px;top:576px;width:15px;height:42px;background:#f0f0f0;"></div>
<div style="position:absolute;left:1331px;top:576px;width:15px;height:14px;border:1px solid #ababab;background:#fff;"></div>
<svg style="left:1335px;top:580px" width="7" height="5" viewBox="0 0 7 5"><path d="M0.3 4.5 L3.5 0.7 L6.7 4.5 Z" fill="#555"/></svg>
<div style="position:absolute;left:1331px;top:590px;width:15px;height:12px;border:1px solid #ababab;background:#fff;"></div>
<div style="position:absolute;left:1331px;top:603px;width:15px;height:14px;border:1px solid #ababab;background:#fff;"></div>
<svg style="left:1335px;top:608px" width="7" height="5" viewBox="0 0 7 5"><path d="M0.3 0.5 L3.5 4.3 L6.7 0.5 Z" fill="#555"/></svg>
<div style="position:absolute;left:1027px;top:644px;width:13px;height:13px;border:1px solid #8a8a8a;background:#fff;"></div>
<span class="t" style="left:1046.5px;top:644px;font-size:12px;line-height:14px;color:#262626;letter-spacing:-0.19px;">Defer Layout Update</span>
<div style="position:absolute;left:1299px;top:639px;width:48px;height:23px;border:1px solid #dcdcdc;background:#fdfdfd;"></div>
<span class="t" style="left:1304.5px;top:644px;font-size:12px;line-height:14px;color:#b4b4b4;letter-spacing:-0.24px;">Update</span>
<!-- status bar -->
<div style="position:absolute;left:0px;top:672px;width:1360px;height:19px;background:#217346;"></div>
<div style="position:absolute;left:1075px;top:672px;width:38px;height:19px;background:#185c37;"></div>
<svg style="left:1087px;top:676px" width="13" height="13" viewBox="0 0 13 13"><rect x="0.5" y="0.5" width="12" height="12" fill="none" stroke="#fff" stroke-width="1"/><path d="M0.5 4.5 H12.5 M0.5 8.5 H12.5 M4.5 0.5 V12.5 M8.5 0.5 V12.5" stroke="#fff" stroke-width="1"/></svg>
<svg style="left:1125px;top:676px" width="14" height="13" viewBox="0 0 14 13"><rect x="0.5" y="0.5" width="13" height="12" fill="none" stroke="#fff" stroke-width="1"/><rect x="3.5" y="3.5" width="7" height="7" fill="none" stroke="#fff" stroke-width="1"/><path d="M5 5.5 H9 M5 7 H9 M5 8.5 H9" stroke="#fff" stroke-width="0.8"/></svg>
<svg style="left:1163px;top:676px" width="14" height="13" viewBox="0 0 14 13"><rect x="0.5" y="0.5" width="13" height="12" fill="none" stroke="#fff" stroke-width="1"/><path d="M1 1 H4 V7.5 H1 Z M5 1 H9 V7.5 H5 Z" fill="#fff"/><path d="M9.5 1 V7.5" stroke="#fff" stroke-width="1"/></svg>
<div style="position:absolute;left:1194px;top:682px;width:6px;height:2px;background:#fff;"></div>
<div style="position:absolute;left:1204px;top:683px;width:100px;height:1px;background:#e3efe8;"></div>
<div style="position:absolute;left:1252px;top:677px;width:5px;height:11px;background:#fff;"></div>
<div style="position:absolute;left:1307px;top:682px;width:8px;height:2px;background:#fff;"></div>
<div style="position:absolute;left:1310px;top:679px;width:2px;height:8px;background:#fff;"></div>
<span class="t" style="left:1327.0px;top:676px;font-size:11px;line-height:13px;color:#fff;letter-spacing:-0.71px;">100%</span>
</div></body></html>
